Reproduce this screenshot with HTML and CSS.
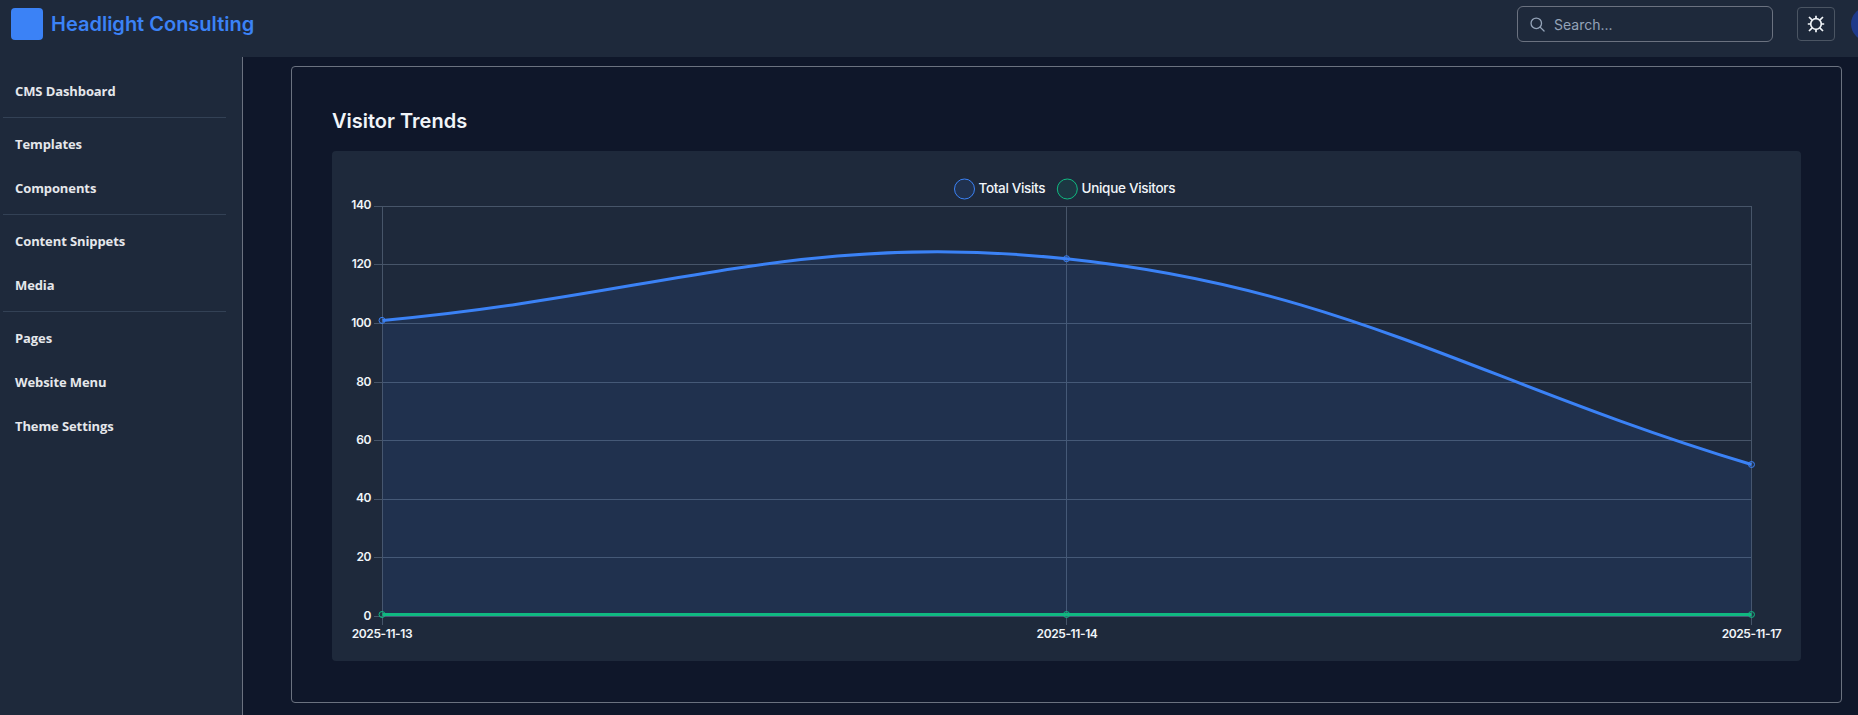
FILE: index.html
```html
<!DOCTYPE html>
<html lang="en">
<head>
  <meta charset="UTF-8" />
  <meta name="viewport" content="width=device-width, initial-scale=1.0" />
  <title>Headlight Consulting</title>
  <link rel="stylesheet" href="styles.css">
</head>
<body>
  <header class="topbar">
    <a class="brand" href="#">
      <span class="brand-logo"></span>
      <span class="brand-name">Headlight Consulting</span>
    </a>
    <div class="topbar-actions">
      <label class="search">
        <svg class="search-icon" viewBox="0 0 16 16" fill="none" stroke="currentColor" stroke-width="1.4" stroke-linecap="round">
          <circle cx="6.7" cy="6.7" r="5.6" />
          <path d="M10.8 10.8 L15 15" />
        </svg>
        <input type="text" placeholder="Search...">
      </label>
      <button class="theme-toggle" aria-label="Toggle theme">
        <svg viewBox="0 0 18 18" width="18" height="18" fill="none" stroke="currentColor" stroke-width="1.7">
          <circle cx="9" cy="9" r="5.3" />
          <path d="M9 .8v3M9 14.2v3M.8 9h3M14.2 9h3M2 2l3.2 3.2M12.8 12.8L16 16M2 16l3.2-3.2M12.8 5.2L16 2" />
        </svg>
      </button>
      <span class="avatar"></span>
    </div>
  </header>

  <div class="layout">
    <nav class="sidebar">
      <a href="#">CMS Dashboard</a>
      <hr>
      <a href="#">Templates</a>
      <a href="#">Components</a>
      <hr>
      <a href="#">Content Snippets</a>
      <a href="#">Media</a>
      <hr>
      <a href="#">Pages</a>
      <a href="#">Website Menu</a>
      <a href="#">Theme Settings</a>
    </nav>

    <main class="content">
      <section class="panel">
        <h2>Visitor Trends</h2>
        <div class="chart-card">
          <svg class="chart" viewBox="0 0 1469 510" width="1469" height="510">
            <!-- legend -->
            <g class="legend">
              <circle class="total" cx="632.5" cy="38" r="10" />
              <text x="646.5" y="42" textLength="67">Total Visits</text>
              <circle class="unique" cx="735.3" cy="38" r="10" />
              <text x="749.5" y="42" textLength="94">Unique Visitors</text>
            </g>

            <!-- grid -->
            <path class="grid" d="M42 55.5H1419M42 113.5H1419M42 172.5H1419M42 231.5H1419M42 289.5H1419M42 348.5H1419M42 406.5H1419M42 465.5H1419M50.5 55V474M734.5 55V474M1419.5 55V474" />

            <!-- total visits -->
            <path class="area" d="M50.5 169.4C324.3 144.7 466.1 79.5 734.5 107.7C1013.9 137.1 1145.5 231.2 1419.5 313.5V466H50.5Z" />
            <path class="line total-line" d="M50.5 169.4C324.3 144.7 466.1 79.5 734.5 107.7C1013.9 137.1 1145.5 231.2 1419.5 313.5" />
            <g class="total">
              <circle cx="50" cy="169.4" r="3" />
              <circle cx="734.5" cy="107.7" r="3" />
              <circle cx="1419.5" cy="313.5" r="3" />
            </g>

            <!-- unique visitors -->
            <path class="line unique-line" d="M50.5 463.5H1419.5" />
            <g class="unique">
              <circle cx="50" cy="463.5" r="3" />
              <circle cx="734.5" cy="463.5" r="3" />
              <circle cx="1419.5" cy="463.5" r="3" />
            </g>

            <g class="ticks ticks-y">
              <text x="39" y="58">140</text>
              <text x="39" y="117">120</text>
              <text x="39" y="176">100</text>
              <text x="39" y="235">80</text>
              <text x="39" y="293">60</text>
              <text x="39" y="351">40</text>
              <text x="39" y="410">20</text>
              <text x="39" y="469">0</text>
            </g>
            <g class="ticks ticks-x">
              <text x="50" y="487">2025-11-13</text>
              <text x="735" y="487">2025-11-14</text>
              <text x="1419.5" y="487">2025-11-17</text>
            </g>
          </svg>
        </div>
      </section>
    </main>
  </div>
</body>
</html>
```
FILE: styles.css
```css
:root {
  --bg-color: #0f172a;
  --surface: #1e293b;
  --text-color: #f1f5f9;
  --primary-color: #3b82f6;
  --success-color: #10b981;
  --border-color: #6b7280;
  --grid-color: #475569;
}

* {
  box-sizing: border-box;
  margin: 0;
  padding: 0;
}

body {
  height: 100vh;
  display: flex;
  flex-direction: column;
  overflow: hidden;
  background: var(--bg-color);
  color: var(--text-color);
  font-family: Inter, sans-serif;
}

.topbar {
  display: flex;
  justify-content: space-between;
  align-items: center;
  flex-shrink: 0;
  height: 57px;
  padding: 0 0 9px 11px;
  background: var(--surface);
}

.brand {
  display: flex;
  align-items: center;
  gap: 8px;
  color: var(--primary-color);
  text-decoration: none;
}

.brand-logo {
  width: 32px;
  height: 32px;
  border-radius: 4px;
  background: var(--primary-color);
}

.brand-name {
  font-size: 20px;
  font-weight: 600;
}

.topbar-actions {
  display: flex;
  align-items: center;
  margin-right: -27px;
}

.search {
  display: flex;
  align-items: center;
  gap: 9px;
  width: 256px;
  height: 36px;
  margin-right: 24px;
  padding: 0 12px;
  border: 1px solid var(--border-color);
  border-radius: 6px;
  color: #94a3b8;
}

.search-icon {
  width: 15px;
  height: 15px;
  flex-shrink: 0;
}

.search input {
  flex: 1;
  min-width: 0;
  border: none;
  outline: none;
  background: transparent;
  color: inherit;
  font: 14px Inter, sans-serif;
}

.search input::placeholder {
  color: #94a3b8;
}

.theme-toggle {
  display: flex;
  align-items: center;
  justify-content: center;
  width: 38px;
  height: 34px;
  margin-right: 16px;
  border: 1px solid #4b5563;
  border-radius: 4px;
  background: transparent;
  color: var(--text-color);
  cursor: pointer;
}

.avatar {
  width: 34px;
  height: 34px;
  border-radius: 50%;
  background: #1e3a8a;
}

.layout {
  display: flex;
  flex: 1;
  min-height: 0;
}

.sidebar {
  width: 243px;
  flex-shrink: 0;
  padding: 12px 16px 0 3px;
  background: var(--surface);
  border-right: 1px solid var(--border-color);
}

.sidebar a {
  display: flex;
  align-items: center;
  height: 44px;
  padding-left: 12px;
  color: #e5e7eb;
  font-family: "Open Sans", sans-serif;
  font-size: 13px;
  font-weight: 700;
  letter-spacing: -0.1px;
  text-decoration: none;
}

.sidebar hr {
  margin: 4px 0;
  border: none;
  border-top: 1px solid #334155;
}

.content {
  flex: 1;
  padding: 9px 16px 12px 48px;
}

.panel {
  height: 637px;
  padding: 40px;
  border: 1px solid var(--border-color);
  border-radius: 4px;
}

.panel h2 {
  margin-bottom: 16px;
  font-size: 20px;
  font-weight: 600;
  line-height: 28px;
}

.chart-card {
  height: 510px;
  border-radius: 4px;
  background: var(--surface);
}

.chart {
  display: block;
}

.grid {
  fill: none;
  stroke: var(--grid-color);
}

.area {
  fill: rgba(59, 130, 246, 0.1);
}

.line {
  fill: none;
  stroke-width: 3;
}

.total-line {
  stroke: var(--primary-color);
}

.unique-line {
  stroke: var(--success-color);
}

.total circle,
circle.total {
  fill: rgba(59, 130, 246, 0.1);
  stroke: var(--primary-color);
}

.unique circle,
circle.unique {
  fill: rgba(16, 185, 129, 0.1);
  stroke: var(--success-color);
}

.legend text {
  fill: var(--text-color);
  font-size: 13.5px;
  font-weight: 500;
}

.ticks text {
  fill: var(--text-color);
  font-size: 12px;
  font-weight: 600;
  letter-spacing: -0.4px;
}

.ticks-y text {
  text-anchor: end;
}

.ticks-x text {
  text-anchor: middle;
}
```
